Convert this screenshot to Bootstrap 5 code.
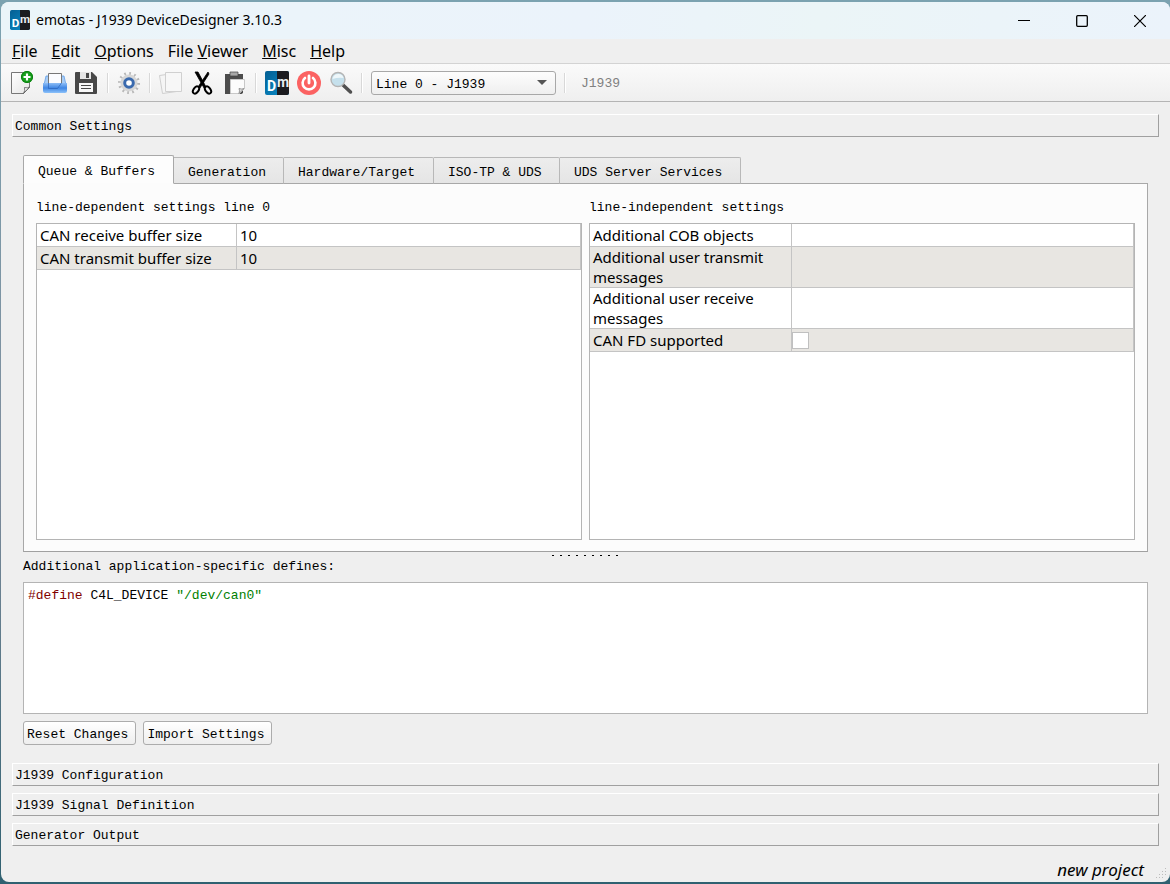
<!DOCTYPE html>
<html lang="en">
<head>
<meta charset="utf-8">
<meta name="viewport" content="width=device-width, initial-scale=1">
<title>emotas - J1939 DeviceDesigner 3.10.3</title>
<link href="https://cdn.jsdelivr.net/npm/bootstrap@5.3.0/dist/css/bootstrap.min.css" rel="stylesheet">
<style>
  :root { --ui: "Noto Sans", "Open Sans", sans-serif; --mono: "Liberation Mono", "DejaVu Sans Mono", monospace; --line: #b4b4b4; }
  body { background: linear-gradient(#7ba2b0, #7e8c9c 55%, #2f6070); font: 13px/20px var(--mono); color: #000; padding: 2px 0 2px 1px; }
  .app-window { background: #efefef; border-radius: 8px; overflow: hidden; flex: 1; }
  .title-strip { background: linear-gradient(90deg, #ebf5f9, #ebf3fb 50%, #ebf5f7 70%, #ebf3fb); height: 37px; font: 14px/20px var(--ui); padding: 0 1px 1px 9px; gap: 6px; }
  .win-btn { width: 58px; height: 36px; border: 0; background: none; padding: 0; }
  .menu-strip { height: 25px; border-bottom: 1px solid #d3d3d3; font: 16px/24px var(--ui); padding-left: 11px; gap: 14px; }
  .menu-strip a { color: #000; text-decoration: none; }
  .tool-strip { height: 38px; background: linear-gradient(#fafafa, #efefef); border-bottom: 1px solid #b4b4b4; padding-left: 10px; gap: 8px; }
  .tool-btn { width: 24px; height: 24px; border: 0; background: none; padding: 0; display: flex; }
  .tool-sep { width: 2px; height: 20px; background: #fff; border-left: 1px solid #d8d8d8; }
  .line-pick { width: 185px; height: 24px; font: 13px/20px var(--mono); color: #000; padding: 3px 24px 0 4px; border: 1px solid #a8a8a8; border-radius: 3px;
    background: url("data:image/svg+xml,%3Csvg xmlns='http://www.w3.org/2000/svg' width='10' height='6'%3E%3Cpath d='M0 0h10L5 5z' fill='%23555'/%3E%3C/svg%3E") no-repeat right 8px center, linear-gradient(#fdfdfd, #efefef); }
  .line-name { color: #808080; padding: 3px 0 0 7px; }
  .page-area { padding: 12px 11px 0; }
  .fold-head { height: 23px; width: 100%; border: 1px solid; border-color: #fff #a0a0a0 #a0a0a0 #fff; background: none; padding: 2px 2px 0; text-align: left; font: 13px/19px var(--mono); color: #000; }
  .fold-list { gap: 7px; }
  .inner-page { padding: 18px 11px; }
  .tab-row { display: grid; grid-template-columns: 151px 110px 150px 126px 181px; border: 0; align-items: end; margin-bottom: -1px; position: relative; z-index: 1; }
  .tab-row .nav-link { height: 27px; width: 100%; padding: 4px 0 0 14px; margin: 0; text-align: left; color: #000; background: linear-gradient(#ededed, #e5e5e5); border: 1px solid #b8b8b8; border-left: 0; border-bottom-color: #a8a8a8; border-radius: 0 2px 0 0; line-height: 20px; }
  .tab-row .nav-link:hover { border-color: #b8b8b8; }
  .tab-row .nav-link.active { height: 29px; border: 1px solid #a8a8a8; border-bottom-color: #fcfcfc; border-radius: 2px 2px 0 0; background: #fdfdfd; color: #000; }
  .tab-page { background: #fcfcfc; border: 1px solid #a8a8a8; border-bottom: 1px solid #a0a0a0; padding: 14px 12px 11px; gap: 7px; }
  .tab-page h2 { font: 13px/20px var(--mono); margin: 0 0 5px; }
  .prop-box { background: #fff; border: 1px solid var(--line); }
  .prop-table { width: 100%; font: 15px/20px var(--ui); border-collapse: separate; border-spacing: 0; table-layout: fixed; }
  .prop-table th { width: 200px; font-weight: 400; border-right: 1px solid #c4c4c4; }
  .prop-table td { border-right: 1px solid #c4c4c4; }
  .prop-table th, .prop-table td { padding: 0 3px; height: 23px; vertical-align: middle; border-bottom: 1px solid #c4c4c4; }
  .prop-table tr:nth-child(even) { background: #e8e6e2; }
  .prop-table .wide-col { width: 202px; }
  .prop-table input { display: block; appearance: none; width: 17px; height: 17px; background: #fff; border: 1px solid #c0c0c0; margin: 0 0 0 -3px; }
  .prop-table input:checked { background: #555; box-shadow: inset 0 0 0 3px #fff; }
  .drag-dots { height: 4px; width: 67px; margin: 0 auto; background: repeating-linear-gradient(90deg, #000 0 2px, transparent 2px 8px) 0 3px / 100% 1px no-repeat; }
  .code-label { padding-top: 1px; margin-bottom: 5px; }
  .code-box { height: 132px; background: #fff; border: 1px solid var(--line); padding: 3px 4px; }
  .code-box pre { font: 13px/20px var(--mono); margin: 0; outline: 0; height: 100%; }
  .tok-dir { color: #800000; } .tok-str { color: #008000; }
  .button-row { gap: 7px; padding-top: 7px; }
  .push-btn { height: 24px; padding: 3px 7px 0 3px; border: 1px solid #acacac; border-radius: 3px; background: linear-gradient(#fff, #eee); font: 13px/19px var(--mono); color: #000; }
  .state-strip { font: italic 17px/20px var(--ui); height: 36px; padding: 14px 26px 0 0; }
  .size-grip { position: absolute; right: 2px; bottom: 2px; }
</style>
</head>
<body class="d-flex flex-column min-vh-100">
<svg width="0" height="0" class="position-absolute" aria-hidden="true">
  <defs>
    <linearGradient id="gBlue" x2="1" y2="1"><stop stop-color="#045f93"/><stop offset="1" stop-color="#0b8fcb"/></linearGradient>
    <linearGradient id="gTray" x2="0" y2="1"><stop stop-color="#8dbdf6"/><stop offset=".5" stop-color="#3f86e4"/><stop offset="1" stop-color="#8cc2fa"/></linearGradient>
    <linearGradient id="gPaper" x2="1" y2="1"><stop stop-color="#fff"/><stop offset="1" stop-color="#e4e4e4"/></linearGradient>
    <symbol id="dm" viewBox="0 0 24 24">
      <rect width="24" height="24" rx="2" fill="url(#gBlue)"/><path d="M12 0h10a2 2 0 0 1 2 2v20a2 2 0 0 1-2 2H12z" fill="#1c1c20"/>
      <text x="2" y="20" font-family="Liberation Sans Narrow, Roboto, sans-serif" font-weight="700" font-size="14" fill="#fff">D</text>
      <text x="12" y="16" font-family="Liberation Sans Narrow, Roboto, sans-serif" font-weight="700" font-size="14" fill="#e8eef2">m</text>
    </symbol>
  </defs>
</svg>
<div class="app-window d-flex flex-column position-relative">
  <header class="title-strip d-flex align-items-center">
    <svg width="20" height="20" aria-hidden="true"><use href="#dm"/></svg>
    <span class="me-auto">emotas - J1939 DeviceDesigner 3.10.3</span>
    <div class="d-flex">
      <button class="win-btn" aria-label="Minimize"><svg width="12" height="12"><path d="M0 5.500h12" stroke="#000"/></svg></button>
      <button class="win-btn" aria-label="Maximize"><svg width="12" height="12"><rect x=".7" y=".7" width="10.600" height="10.600" rx="1" fill="none" stroke="#000" stroke-width="1.300"/></svg></button>
      <button class="win-btn" aria-label="Close"><svg width="12" height="12"><path d="M0 0l12 12M12 0L0 12" stroke="#000" stroke-width="1.200"/></svg></button>
    </div>
  </header>
  <nav class="menu-strip d-flex" aria-label="Main menu">
    <a href="#"><u>F</u>ile</a><a href="#"><u>E</u>dit</a><a href="#"><u>O</u>ptions</a><a href="#">File <u>V</u>iewer</a><a href="#"><u>M</u>isc</a><a href="#"><u>H</u>elp</a>
  </nav>
  <div class="tool-strip d-flex align-items-center" role="toolbar" aria-label="Tools">
    <button class="tool-btn" aria-label="New"><svg width="24" height="24">
      <path d="M.5 1.500h18v15l-6 6H.5z" fill="url(#gPaper)" stroke="#777"/><path d="M12.500 22.500q2-3 1-6 3 1 5-.5z" fill="#fff" stroke="#555" stroke-width=".8"/>
      <circle cx="16" cy="6" r="6" fill="#17a01c"/><circle cx="16" cy="6" r="5.500" fill="none" stroke="#0b7d10"/><path d="M16 2.500v7M12.500 6h7" stroke="#fff" stroke-width="2.200"/></svg></button>
    <button class="tool-btn" aria-label="Open"><svg width="24" height="24">
      <path d="M3 5h18l2 9H1z" fill="#a9cdf6" stroke="#5f9ee8" stroke-width=".8"/><path d="M5.500 2.500h13V14h-13z" fill="#fbfcff" stroke="#777"/><path d="M0 12h24v8q0 2-2 2H2q-2 0-2-2z" fill="url(#gTray)"/><path d="M5.500 12v5.500h9l4-5.500" fill="none" stroke="#2a61b8" stroke-width=".7"/></svg></button>
    <button class="tool-btn" aria-label="Save"><svg width="24" height="24">
      <path d="M1 1h16l5 5v16q0 1-1 1H1q-1 0-1-1V2q0-1 1-1z" fill="#484848"/><path d="M5 1h11v7H5z" fill="#e6e6e6"/><path d="M11 2h3v5h-3z" fill="#484848"/><path d="M4 12h14v9H4z" fill="#f8f8f8"/><path d="M6 14.500h10M6 17.500h10" stroke="#484848"/></svg></button>
    <span class="tool-sep"></span>
    <button class="tool-btn" aria-label="Settings"><svg width="24" height="24" viewBox="-12 -12 24 24">
      <circle r="9.500" fill="none" stroke="#b8b8b8" stroke-width="3" stroke-dasharray="1.700 3.270"/><circle r="8.500" fill="#d6d6d6"/><circle r="4.300" fill="#fff" stroke="#3a6aae" stroke-width="3"/></svg></button>
    <span class="tool-sep"></span>
    <button class="tool-btn" aria-label="Copy" disabled><svg width="24" height="24">
      <path d="M.5 4.500l14-2 3 18-14 2z" fill="#f5f5f5" stroke="#cfcfcf"/><path d="M6.500 1.500h16v19h-16z" fill="#f7f7f7" stroke="#d0d0d0"/></svg></button>
    <button class="tool-btn" aria-label="Cut"><svg width="24" height="24" fill="none" stroke="#000">
      <path d="M4 1l3 0 8 15-2 1zM17 1l1 2-9 14-2-1z" fill="#000" stroke-width=".8"/><ellipse cx="5" cy="19" rx="2.500" ry="4" stroke-width="2" transform="rotate(35 5 19)"/><ellipse cx="17" cy="19" rx="2.500" ry="4" stroke-width="2" transform="rotate(-35 17 19)"/></svg></button>
    <button class="tool-btn" aria-label="Paste"><svg width="24" height="24">
      <path d="M2 3h18v20H2z" fill="#4c4c4c"/><path d="M7 1h8v4H7z" fill="#a8a8a8" stroke="#444" stroke-width=".7"/><path d="M7.500 8.500h14v9l-5 5h-9z" fill="#fcfcfc" stroke="#c8c8c8"/><path d="M20 22h2v2h-5z" fill="#f2f2f2"/><path d="M16 22.500q1-3 0-5 3 1 5 0z" fill="#ddd" stroke="#777" stroke-width=".7"/></svg></button>
    <span class="tool-sep"></span>
    <button class="tool-btn" aria-label="DeviceDesigner"><svg width="24" height="24"><use href="#dm"/></svg></button>
    <button class="tool-btn" aria-label="Quit"><svg width="24" height="24" fill="none" stroke="#fff" stroke-linecap="round">
      <circle cx="12" cy="12" r="12" fill="#fb6262" stroke="none"/><path d="M8 7a6.400 6.400 0 1 0 8 0" stroke-width="2.600"/><path d="M12 5v7" stroke-width="2.800"/></svg></button>
    <button class="tool-btn" aria-label="Search"><svg width="24" height="24">
      <path d="M14 14l7.500 7" stroke="#505050" stroke-width="3.500" stroke-linecap="round"/><circle cx="9" cy="8.500" r="7" fill="#c5e0ec" stroke="#b4b4b4" stroke-width="1.400"/><path d="M3.500 8q1-5 6-5 4 0 5 4-5-1-11 1z" fill="#eef7fa"/></svg></button>
    <span class="tool-sep"></span>
    <select class="line-pick form-select" aria-label="Line"><option>Line 0 - J1939</option></select>
    <span class="tool-sep"></span>
    <span class="line-name">J1939</span>
  </div>

  <main class="page-area d-flex flex-column flex-grow-1">
    <button class="fold-head">Common Settings</button>
    <section class="inner-page d-flex flex-column flex-grow-1">
      <div class="nav nav-tabs tab-row" role="tablist">
        <button class="nav-link active" role="tab" aria-selected="true">Queue &amp; Buffers</button>
        <button class="nav-link" role="tab">Generation</button>
        <button class="nav-link" role="tab">Hardware/Target</button>
        <button class="nav-link" role="tab">ISO-TP &amp; UDS</button>
        <button class="nav-link" role="tab">UDS Server Services</button>
      </div>
      <div class="tab-page d-flex flex-grow-1" role="tabpanel">
        <div class="d-flex flex-column w-50">
          <h2>line-dependent settings line 0</h2>
          <div class="prop-box flex-grow-1">
            <table class="prop-table">
              <tr><th scope="row">CAN receive buffer size</th><td>10</td></tr>
              <tr><th scope="row">CAN transmit buffer size</th><td>10</td></tr>
            </table>
          </div>
        </div>
        <div class="d-flex flex-column w-50">
          <h2>line-independent settings</h2>
          <div class="prop-box flex-grow-1">
            <table class="prop-table">
              <tr><th scope="row" class="wide-col">Additional COB objects</th><td></td></tr>
              <tr><th scope="row">Additional user transmit messages</th><td></td></tr>
              <tr><th scope="row">Additional user receive messages</th><td></td></tr>
              <tr><th scope="row"><label for="canfd">CAN FD supported</label></th><td><input type="checkbox" id="canfd"></td></tr>
            </table>
          </div>
        </div>
      </div>
      <div class="drag-dots"></div>
      <div id="defs-label" class="code-label">Additional application-specific defines:</div>
      <div class="code-box"><pre contenteditable="true" role="textbox" aria-multiline="true" aria-labelledby="defs-label" spellcheck="false"><span class="tok-dir">#define</span> C4L_DEVICE <span class="tok-str">"/dev/can0"</span></pre></div>
      <div class="button-row d-flex">
        <button class="push-btn">Reset Changes</button>
        <button class="push-btn">Import Settings</button>
      </div>
    </section>
    <div class="fold-list d-flex flex-column">
      <button class="fold-head">J1939 Configuration</button>
      <button class="fold-head">J1939 Signal Definition</button>
      <button class="fold-head">Generator Output</button>
    </div>
  </main>
  <footer class="state-strip text-end">new project</footer>
  <svg class="size-grip" width="12" height="12" fill="#bcbcbc" aria-hidden="true"><path d="M9 0h1v1h-1zM6 3h1v1h-1zM9 3h1v1h-1zM3 6h1v1h-1zM6 6h1v1h-1zM9 6h1v1h-1zM0 9h1v1h-1zM3 9h1v1h-1zM6 9h1v1h-1z"/></svg>
</div>
<script src="https://cdn.jsdelivr.net/npm/bootstrap@5.3.0/dist/js/bootstrap.bundle.min.js"></script>
</body>
</html>
